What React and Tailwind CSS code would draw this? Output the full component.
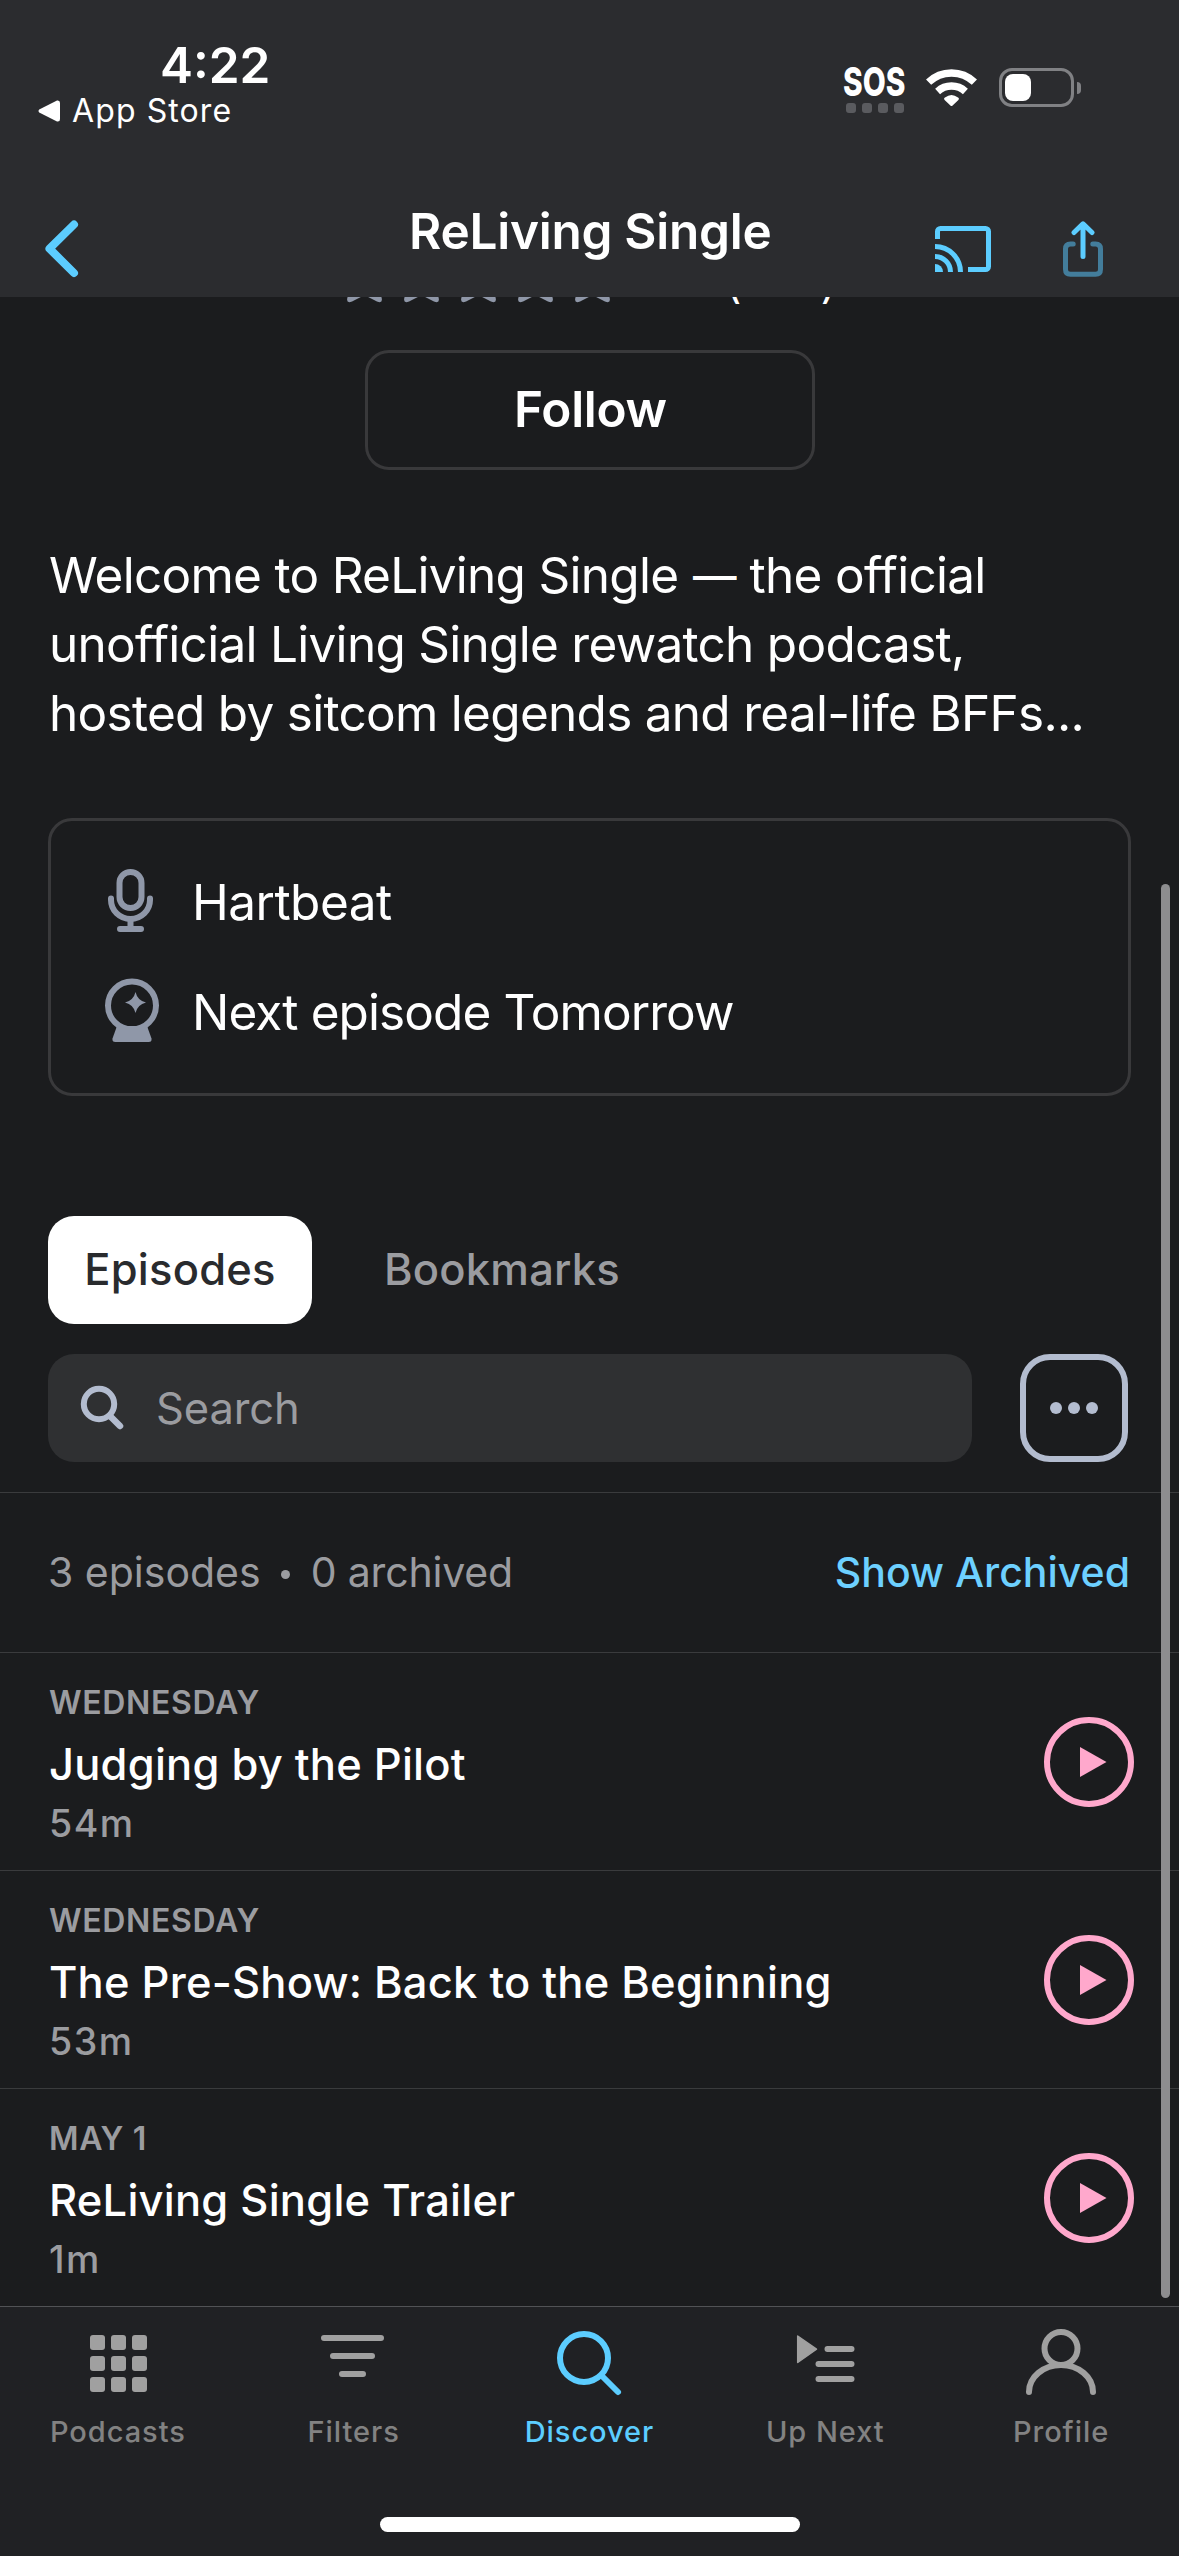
const episodes = [
  { date: 'WEDNESDAY', title: 'Judging by the Pilot', length: '54m' },
  { date: 'WEDNESDAY', title: 'The Pre-Show: Back to the Beginning', length: '53m' },
  { date: 'MAY 1', title: 'ReLiving Single Trailer', length: '1m' },
];

const tabs = [
  { label: 'Podcasts', Icon: GridIcon },
  { label: 'Filters', Icon: FiltersIcon },
  { label: 'Discover', Icon: DiscoverIcon, active: true },
  { label: 'Up Next', Icon: UpNextIcon },
  { label: 'Profile', Icon: ProfileIcon },
];

function StatusBar() {
  return (
    <div className="flex h-[220px] justify-between pr-[98px] pl-[38px]">
      <div className="pt-[37px]">
        <p className="ml-[122px] text-[49.5px] leading-[56px] font-semibold">4:22</p>
        <div className="flex h-[35px] items-center gap-3">
          <svg className="h-[22px] w-[22px]" viewBox="0 0 22 22" fill="currentColor">
            <path d="M1.2 9.6 19 .6Q22 0 22 3v16q0 3-3 2.4L1.2 12.4Q-.2 11 1.2 9.6z" />
          </svg>
          <span className="text-[32px] leading-[35px] tracking-[0.0345em]">App Store</span>
        </div>
      </div>

      <div className="flex items-start pt-[67px]">
        <div className="w-[62px]">
          <p className="-ml-px origin-left scale-x-[0.745] text-[40px] leading-[30px] font-extrabold">SOS</p>
          <div className="mt-1.5 ml-0.5 flex gap-1.5">
            <span className="h-2.5 w-2.5 rounded-[3px] bg-[#5a5b5f]" />
            <span className="h-2.5 w-2.5 rounded-[3px] bg-[#5a5b5f]" />
            <span className="h-2.5 w-2.5 rounded-[3px] bg-[#5a5b5f]" />
            <span className="h-2.5 w-2.5 rounded-[3px] bg-[#5a5b5f]" />
          </div>
        </div>
        <svg className="mt-0.5 ml-5 h-[37px] w-[51px]" viewBox="0 0 51 37" fill="none" stroke="currentColor" strokeWidth="7.4">
          <path d="M2.6 13.2a33 33 0 0 1 45.8 0" />
          <path d="M11.6 22.4a20.8 20.8 0 0 1 27.8 0" />
          <path d="M18.6 31Q17.4 29.6 19 28.6 25.5 23.6 32 28.6q1.6 1 .4 2.4L26.6 36.4q-1.1 1-2.2 0z" fill="currentColor" stroke="none" />
        </svg>
        <div className="mt-px ml-[22px] flex items-center gap-[3px]">
          <div className="h-[39px] w-[75px] rounded-[13px] border-[3px] border-[#808184] p-[3px]">
            <div className="h-full w-[26px] rounded-[8px] bg-white" />
          </div>
          <div className="h-3 w-1 rounded-r-full bg-[#808184]" />
        </div>
      </div>
    </div>
  );
}

function NavBar() {
  return (
    <div className="flex h-[57px] items-center pr-[74px] pl-[41px] text-[#5ccdff]">
      <svg className="h-[65px] w-[41px] shrink-0" viewBox="0 0 41 65" fill="none" stroke="currentColor" strokeWidth="8" strokeLinecap="round" strokeLinejoin="round">
        <path d="M33 8.5 8.5 32.7 33 57" />
      </svg>
      <h1 className="mb-[35px] ml-[327px] text-[49.5px] leading-[60px] font-semibold tracking-[-0.005em] whitespace-nowrap text-white">
        ReLiving Single
      </h1>
      <svg className="ml-auto h-[46px] w-[56px]" viewBox="0 0 56 46" fill="none" stroke="currentColor" strokeWidth="5">
        <path d="M2.5 13V5.5a3 3 0 0 1 3-3h45a3 3 0 0 1 3 3v35a3 3 0 0 1-3 3H33" />
        <path d="M0 20.5A25.5 25.5 0 0 1 25.5 46M0 30.5A15.5 15.5 0 0 1 15.5 46" />
        <path d="M0 38a8 8 0 0 1 8 8H0z" fill="currentColor" stroke="none" />
      </svg>
      <svg className="ml-[70px] h-[57px] w-[44px]" viewBox="0 0 44 57" fill="none" stroke="currentColor" strokeWidth="5" strokeLinecap="round" strokeLinejoin="round">
        <path className="text-[#437d9b]" d="M12.2 24H9.5q-5 0-5 5v20.2q0 5 5 5h25q5 0 5-5V29q0-5-5-5h-2.7" />
        <path d="M22 36.5V4.2M13 12.5 22 3.8l9 8.7" />
      </svg>
    </div>
  );
}

function Star() {
  return (
    <svg className="h-[65px] w-[57px]" viewBox="1.5 0 21 24" fill="#8f97a8">
      <path d="M12 18.5 7.4 20.9Q5.2 21.8 5.65 19.6L7.2 13.97 2 9.24l7.19-.61L12 2l2.81 6.63 7.19.61-5.2 4.73 1.55 5.63q.45 2.2-1.75 1.3z" />
    </svg>
  );
}

function MicIcon() {
  return (
    <svg className="mb-1 h-[72px] w-[60px]" viewBox="0 0 60 72" fill="none" stroke="#8f97a8" strokeWidth="6" strokeLinecap="round">
      <rect x="17.5" y="8" width="22" height="36" rx="11" />
      <path d="M9 34.5v1.5a19.5 19 0 0 0 39 0v-1.5" />
      <path d="M28.5 55v8M18 65h21" />
    </svg>
  );
}

function CrystalBallIcon() {
  return (
    <svg className="mb-1 h-[72px] w-[60px]" viewBox="0 0 60 72" fill="#8f97a8">
      <circle cx="30" cy="31.5" r="24" fill="none" stroke="#8f97a8" strokeWidth="6" />
      <path d="M15 52h30l4.5 12.5q.6 3.5-3 3.5h-33q-3.6 0-3-3.5z" />
      <path d="M33.5 18q2 8.5 10.5 10.5-8.5 2-10.5 10.5-2-8.5-10.5-10.5 8.5-2 10.5-10.5z" />
    </svg>
  );
}

function GridIcon() {
  return (
    <svg className="h-[72px] w-[72px]" viewBox="0 0 72 72" fill="currentColor">
      {[10, 31, 52].map((y) =>
        [8, 29, 50].map((x) => <rect key={`${x}-${y}`} x={x} y={y} width="15" height="15" rx="3" />)
      )}
    </svg>
  );
}

function FiltersIcon() {
  return (
    <svg className="h-[72px] w-[72px]" viewBox="0 0 72 72" stroke="currentColor" strokeWidth="6" strokeLinecap="round">
      <path d="M6 13h57M15 31h39M24 49h21" />
    </svg>
  );
}

function DiscoverIcon() {
  return (
    <svg className="h-[72px] w-[72px]" viewBox="0 0 72 72" fill="none" stroke="currentColor" strokeWidth="6" strokeLinecap="round">
      <circle cx="31" cy="33" r="24" />
      <path d="M48.5 50.5 65 67" />
    </svg>
  );
}

function UpNextIcon() {
  return (
    <svg className="h-[72px] w-[72px]" viewBox="0 0 72 72" stroke="currentColor" strokeWidth="6" strokeLinecap="round">
      <path d="M8.7 11v26.5L27.5 24.2z" fill="currentColor" strokeWidth="1.5" strokeLinejoin="round" />
      <path d="M38.5 24h24M29.5 39h33M29.5 54h33" />
    </svg>
  );
}

function ProfileIcon() {
  return (
    <svg className="h-[72px] w-[72px]" viewBox="0 0 72 72" fill="none" stroke="currentColor" strokeWidth="6" strokeLinecap="round">
      <circle cx="36" cy="23.5" r="16.5" />
      <path d="M4 67A32 27 0 0 1 68 67" />
    </svg>
  );
}

function EpisodeRow({ date, title, length }) {
  return (
    <li className="flex h-[218px] items-center justify-between border-t border-[#3a3b3d] pr-[45px] pl-[49px]">
      <div className="h-full pt-[25px]">
        <p className="text-[32px] leading-[50px] font-semibold tracking-[0.02em] text-[#9b9ca0]">{date}</p>
        <h3 className="text-[43.5px] leading-[73px] font-medium tracking-[0.005em] text-white">{title}</h3>
        <p className="text-[37.5px] leading-[46px] font-medium tracking-[0.04em] text-[#9b9ca0]">{length}</p>
      </div>
      <button aria-label={`Play ${title}`}>
        <svg className="h-[90px] w-[90px]" viewBox="0 0 90 90">
          <circle cx="45" cy="45" r="42" fill="none" stroke="#ffa8cc" strokeWidth="6" />
          <path d="M36 30v30l26.5-15z" fill="#ffa8cc" />
        </svg>
      </button>
    </li>
  );
}

export default function App() {
  return (
    <div className="relative flex h-[2556px] w-[1179px] flex-col overflow-hidden bg-[#1b1c1e] font-[Inter,sans-serif] text-white">
      <header className="h-[297px] shrink-0 bg-[#2b2c2f]">
        <StatusBar />
        <NavBar />
      </header>

      <main className="h-[2009px] shrink-0 overflow-hidden">
        {/* ratings row, mostly scrolled under the header */}
        <div className="-mt-[52px] flex h-[65px] items-end pl-[336px]">
          <Star />
          <Star />
          <Star />
          <Star />
          <Star />
          <div className="ml-[105px] flex w-[110px] justify-between text-[42px] leading-[54px]">
            <span>(</span>
            <span>)</span>
          </div>
        </div>

        <button className="mx-auto mt-10 block h-[120px] w-[450px] rounded-[24px] border-[3px] border-[#39393b] pb-0.5 pl-0.5 text-[49.5px] font-semibold tracking-[-0.0058em]">
          Follow
        </button>

        <p className="mt-[71px] pl-[49px] text-[49.5px] leading-[69px] tracking-[-0.0145em] whitespace-nowrap">
          Welcome to ReLiving Single <span className="-mx-0.5 inline-block scale-x-[0.88]">—</span> the official
          <br />
          unofficial Living Single rewatch podcast,
          <br />
          hosted by sitcom legends and real-life BFFs...
        </p>

        <div className="mx-12 mt-[70px] h-[278px] rounded-[24px] border-[3px] border-[#39393b] pt-[26px] pl-[51px]">
          <div className="flex h-[110px] items-center gap-[30px]">
            <MicIcon />
            <span className="text-[49.5px] tracking-[-0.0105em]">Hartbeat</span>
          </div>
          <div className="flex h-[110px] items-center gap-[30px]">
            <CrystalBallIcon />
            <span className="text-[49.5px] tracking-[-0.0182em]">Next episode Tomorrow</span>
          </div>
        </div>

        <div className="mt-[120px] flex h-[108px] pl-12 text-[43.5px] font-medium tracking-[0.005em]">
          <button className="w-[264px] rounded-[26px] bg-white text-[#292b2e]">Episodes</button>
          <button className="ml-[72px] text-[#9b9ca0]">Bookmarks</button>
        </div>

        <div className="mt-[30px] flex gap-12 px-12">
          <div className="flex h-[108px] w-[924px] items-center rounded-[26px] bg-[#2f3032] pl-[30px]">
            <svg className="h-[48px] w-[48px]" viewBox="0 0 48 48" fill="none" stroke="#b3bccf" strokeWidth="6" strokeLinecap="round">
              <circle cx="21" cy="20" r="15.2" />
              <path d="m33 33 9 9" strokeWidth="6.5" />
            </svg>
            <span className="ml-[30px] pt-0.5 text-[43.5px] tracking-[-0.003em] text-[#9b9ca0]">Search</span>
          </div>
          <button aria-label="More" className="flex h-[108px] w-[108px] items-center justify-center gap-1.5 rounded-[30px] border-[6px] border-[#b3bccf]">
            <span className="h-3 w-3 rounded-full bg-[#b3bccf]" />
            <span className="h-3 w-3 rounded-full bg-[#b3bccf]" />
            <span className="h-3 w-3 rounded-full bg-[#b3bccf]" />
          </button>
        </div>

        <div className="mt-[30px] flex h-[160px] items-center justify-between border-t border-[#3a3b3d] pr-[49px] pl-12 text-[41px]">
          <div className="flex items-center text-[#9b9ca0]">
            <span>3 episodes</span>
            <span className="mt-1 mr-[21px] ml-5 h-[9px] w-[9px] rounded-full bg-[#9b9ca0]" />
            <span className="tracking-[-0.004em]">0 archived</span>
          </div>
          <button className="font-medium text-[#6dd0ff]">Show Archived</button>
        </div>

        <ul>
          {episodes.map((episode) => (
            <EpisodeRow key={episode.title} {...episode} />
          ))}
        </ul>
      </main>

      <nav className="grow border-t border-[#515255] bg-[#202124]">
        <div className="grid grid-cols-5">
          {tabs.map(({ label, Icon, active }) => (
            <a key={label} className={`flex flex-col items-center pt-[18px] ${active ? 'text-[#5ccdff]' : 'text-[#a0a0a0]'}`}>
              <Icon />
              <span className={`mt-[15px] text-[29px] leading-10 font-medium tracking-[0.033em] ${active ? '' : 'text-[#828282]'}`}>
                {label}
              </span>
            </a>
          ))}
        </div>
        <div className="mx-auto mt-[65px] h-[15px] w-[420px] rounded-full bg-white" />
      </nav>

      {/* scroll indicator */}
      <div className="absolute top-[884px] left-[1161px] h-[1414px] w-[9px] rounded-full bg-[#8d8d8f]" />
    </div>
  );
}
